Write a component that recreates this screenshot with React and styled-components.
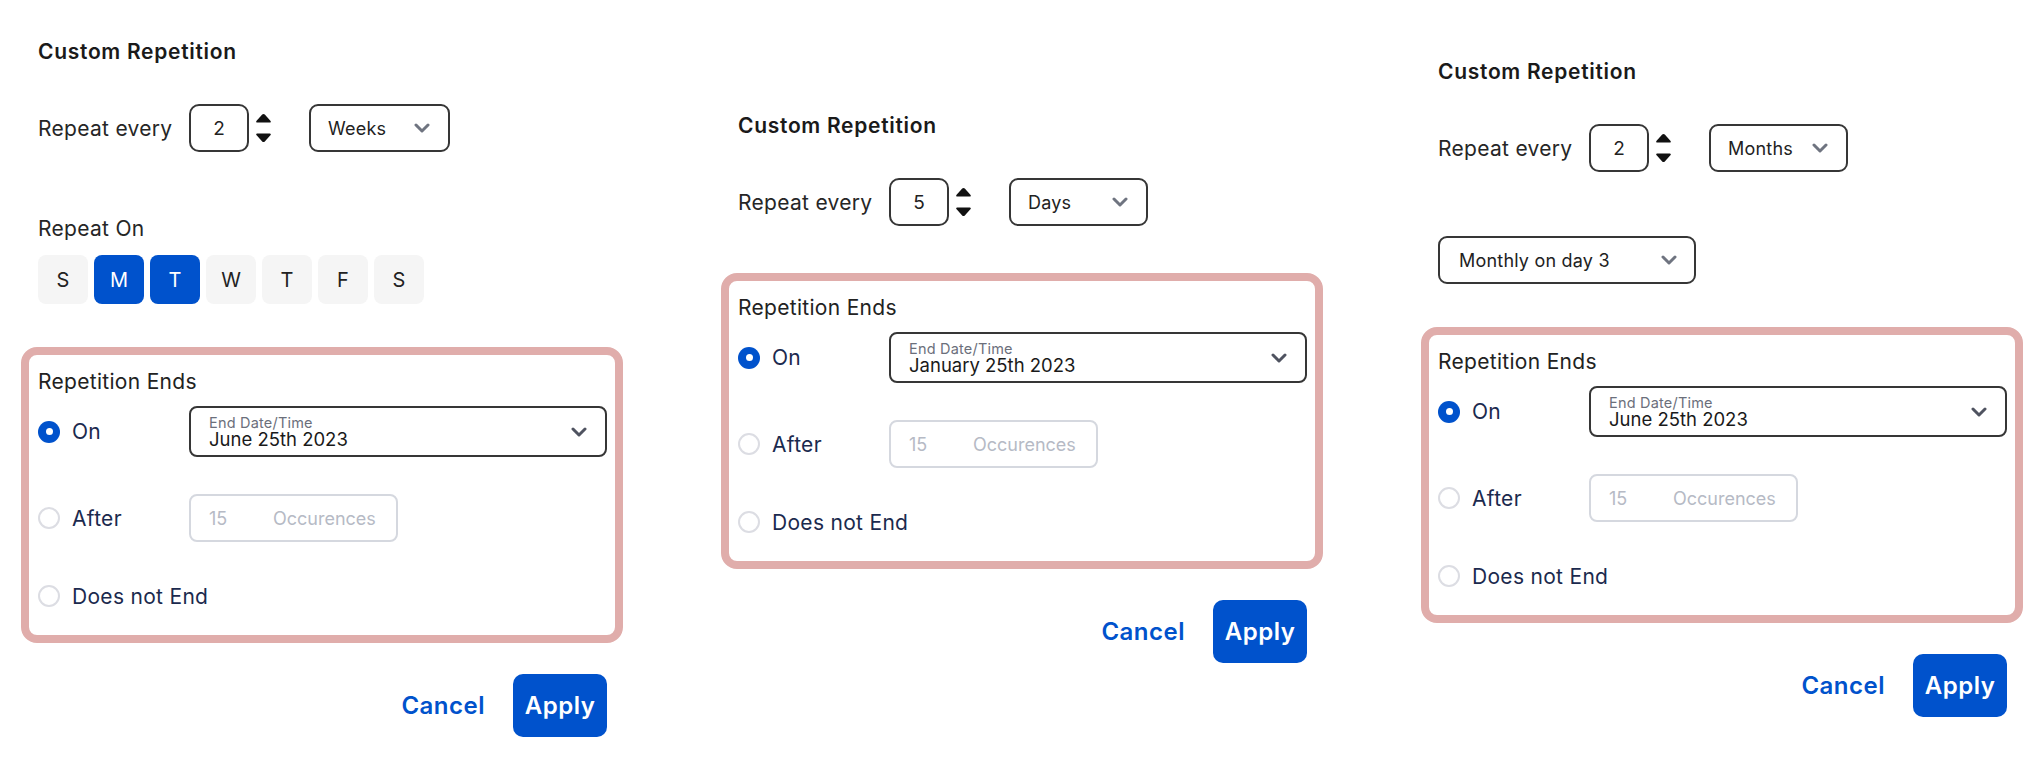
import styled, { createGlobalStyle } from 'styled-components'

const BLUE = '#0052cc';

const GlobalStyle = createGlobalStyle`
  html, body {
    margin: 0;
    padding: 0;
    background: #fff;
  }
  body {
    font-family: Inter, "Noto Sans", sans-serif;
    color: #222;
  }
  * { box-sizing: border-box; }
`;

function Chevron(props) {
  let color = props.color || '#6f7480';
  return (
    <svg width="16" height="10" viewBox="0 0 16 10">
      <polyline points="2,2 8,8 14,2" fill="none" stroke={color} strokeWidth="3"
        strokeLinecap="round" strokeLinejoin="round" />
    </svg>
  )
}

function Spinner() {
  return (
    <SpinnerSvg width="17" height="30" viewBox="0 0 17 30">
      <path d="M7.2 1.6 Q8.5 0.2 9.8 1.6 L15.6 8 Q16.6 9.5 14.8 9.5 L2.2 9.5 Q0.4 9.5 1.4 8 Z" fill="#111" />
      <path d="M7.2 28.4 Q8.5 29.8 9.8 28.4 L15.6 22 Q16.6 20.5 14.8 20.5 L2.2 20.5 Q0.4 20.5 1.4 22 Z" fill="#111" />
    </SpinnerSvg>
  )
}

function RepetitionPanel(props) {
  let days = ['S', 'M', 'T', 'W', 'T', 'F', 'S'];
  let selected = props.days || [];

  return (
    <Panel>
      <Title>Custom Repetition</Title>

      <RepeatRow>
        <RowLabel>Repeat every</RowLabel>
        <NumberBox>{props.count}</NumberBox>
        <Spinner />
        <Select $width={props.unitWidth || 139} $offset={37}>
          <span>{props.unit}</span>
          <Chevron />
        </Select>
      </RepeatRow>

      {props.days && (
        <>
          <SectionLabel>Repeat On</SectionLabel>
          <DayRow>
            {days.map((d, i) => (
              <DayButton key={i} $active={selected.includes(i)}>{d}</DayButton>
            ))}
          </DayRow>
        </>
      )}

      {props.monthly && (
        <MonthSelect $width={258}>
          <span>{props.monthly}</span>
          <Chevron />
        </MonthSelect>
      )}

      <EndsBox $gap={props.endsGap || 43}>
        <EndsTitle>Repetition Ends</EndsTitle>

        <OptionRow $gap={10} $height={51}>
          <Radio $checked />
          <OptionLabel>On</OptionLabel>
          <DateSelect>
            <DateText>
              <DateCaption>End Date/Time</DateCaption>
              <DateValue>{props.endDate}</DateValue>
            </DateText>
            <Chevron color="#4f5360" />
          </DateSelect>
        </OptionRow>

        <OptionRow $gap={37} $height={48}>
          <Radio />
          <OptionLabel>After</OptionLabel>
          <OccInput>
            <OccCount>15</OccCount>
            <span>Occurences</span>
          </OccInput>
        </OptionRow>

        <OptionRow $gap={40} $height={28}>
          <Radio />
          <OptionLabel>Does not End</OptionLabel>
        </OptionRow>
      </EndsBox>

      <Actions>
        <CancelButton>Cancel</CancelButton>
        <ApplyButton>Apply</ApplyButton>
      </Actions>
    </Panel>
  )
}

export default function App() {
  return (
    <>
      <GlobalStyle />
      <Page>
        <RepetitionPanel count="2" unit="Weeks" unitWidth={141} days={[1, 2]} endDate="June 25th 2023" />
        <RepetitionPanel count="5" unit="Days" endsGap={47} endDate="January 25th 2023" />
        <RepetitionPanel count="2" unit="Months" monthly="Monthly on day 3" endDate="June 25th 2023" />
      </Page>
    </>
  )
}

const Page = styled.div`
  display: flex;
  align-items: center;
  gap: 131px;
  width: 2040px;
  height: 775px;
  padding-left: 38px;
`;

const Panel = styled.div`
  width: 569px;
  flex-shrink: 0;
  display: flex;
  flex-direction: column;
`;

const Title = styled.div`
  font-size: 21px;
  font-weight: 600;
  line-height: 28px;
  letter-spacing: 0.7px;
  color: #1a1a1a;
`;

const RepeatRow = styled.div`
  display: flex;
  align-items: center;
  height: 48px;
  margin-top: 38px;
`;

const RowLabel = styled.span`
  font-size: 21px;
  letter-spacing: 0.3px;
  color: #262626;
  width: 151px;
`;

const NumberBox = styled.div`
  width: 60px;
  height: 48px;
  border: 2px solid #363636;
  border-radius: 10px;
  display: flex;
  align-items: center;
  justify-content: center;
  font-size: 19px;
  color: #222;
`;

const SpinnerSvg = styled.svg`
  margin-left: 6px;
  display: block;
`;

const Select = styled.div`
  width: ${(props) => props.$width}px;
  height: 48px;
  margin-left: ${(props) => props.$offset || 0}px;
  border: 2px solid #363636;
  border-radius: 9px;
  display: flex;
  align-items: center;
  justify-content: space-between;
  padding: 0 18px 0 17px;
  font-size: 18px;
  letter-spacing: 0.2px;
  color: #222;
  svg { display: block; }
`;

const MonthSelect = styled(Select)`
  margin-top: 64px;
  padding: 0 17px 0 19px;
`;

const SectionLabel = styled.div`
  margin-top: 63px;
  font-size: 21px;
  line-height: 28px;
  letter-spacing: 0.3px;
  color: #262626;
`;

const DayRow = styled.div`
  display: flex;
  gap: 6px;
  margin-top: 12px;
`;

const DayButton = styled.div`
  width: 50px;
  height: 49px;
  border-radius: 8px;
  display: flex;
  align-items: center;
  justify-content: center;
  font-size: 20px;
  background-color: ${(props) => (props.$active ? BLUE : '#f5f5f5')};
  color: ${(props) => (props.$active ? '#fff' : '#222')};
`;

const EndsBox = styled.div`
  margin: ${(props) => props.$gap}px -16px 0 -17px;
  border: 8px solid #e0adab;
  border-radius: 16px;
  padding: 13px 8px 25px 9px;
  background: #fff;
`;

const EndsTitle = styled.div`
  font-size: 21px;
  line-height: 28px;
  letter-spacing: 0.3px;
  color: #222;
`;

const OptionRow = styled.div`
  display: flex;
  align-items: center;
  height: ${(props) => props.$height}px;
  margin-top: ${(props) => props.$gap}px;
`;

const Radio = styled.span`
  width: 22px;
  height: 22px;
  border-radius: 50%;
  flex-shrink: 0;
  background: ${(props) => (props.$checked ? BLUE : '#fff')};
  border: ${(props) => (props.$checked ? 'none' : '2.5px solid #dcdde3')};
  display: flex;
  align-items: center;
  justify-content: center;
  &::after {
    content: "";
    display: ${(props) => (props.$checked ? 'block' : 'none')};
    width: 7px;
    height: 7px;
    border-radius: 50%;
    background: #fff;
  }
`;

const OptionLabel = styled.span`
  margin-left: 12px;
  width: 117px;
  flex-shrink: 0;
  font-size: 21px;
  letter-spacing: 0.3px;
  color: #1b2a4e;
  white-space: nowrap;
`;

const DateSelect = styled.div`
  flex: 1;
  height: 51px;
  border: 2px solid #363636;
  border-radius: 8px;
  display: flex;
  align-items: center;
  justify-content: space-between;
  padding: 0 18px 0 18px;
  svg { display: block; }
`;

const DateText = styled.div`
  display: flex;
  flex-direction: column;
  padding-top: 1px;
`;

const DateCaption = styled.span`
  font-size: 14.5px;
  line-height: 14px;
  letter-spacing: 0.2px;
  color: #6b6f7b;
`;

const DateValue = styled.span`
  font-size: 18.5px;
  line-height: 19px;
  color: #1a1a1a;
`;

const OccInput = styled.div`
  width: 209px;
  height: 48px;
  border: 2px solid #d5d8df;
  border-radius: 8px;
  display: flex;
  align-items: center;
  padding-left: 18px;
  font-size: 18px;
  color: #b6bac5;
`;

const OccCount = styled.span`
  width: 64px;
`;

const Actions = styled.div`
  display: flex;
  justify-content: flex-end;
  align-items: center;
  gap: 28px;
  margin-top: 31px;
`;

const CancelButton = styled.button`
  background: none;
  border: none;
  padding: 0;
  font-family: inherit;
  font-size: 24px;
  font-weight: 600;
  letter-spacing: 0.5px;
  color: ${BLUE};
  cursor: pointer;
`;

const ApplyButton = styled.button`
  width: 94px;
  height: 63px;
  border: none;
  border-radius: 10px;
  background-color: ${BLUE};
  color: #fff;
  font-family: inherit;
  font-size: 24px;
  font-weight: 600;
  letter-spacing: 0.5px;
  cursor: pointer;
`;
